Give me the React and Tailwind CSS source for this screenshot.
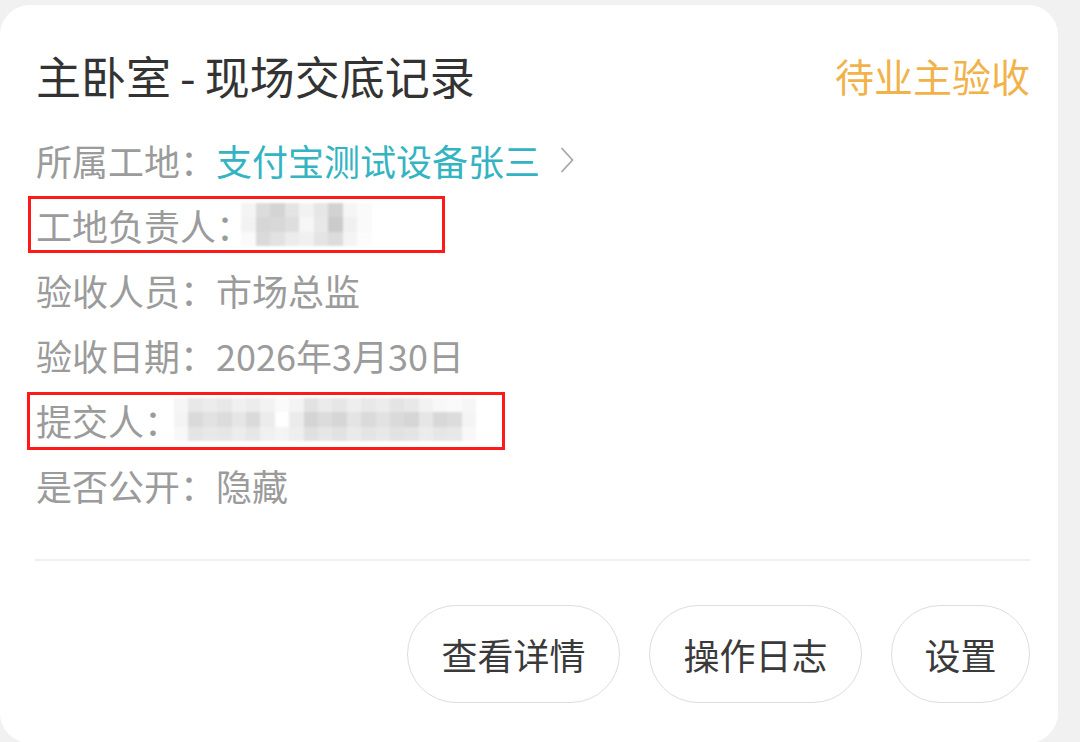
import React from 'react';

const font = { fontFamily: '"Noto Sans CJK SC", "Noto Sans", sans-serif' };

// mosaic cells for the masked values (gray tones, row by row)
const mask1 = [
  ['#f4f4f4', '#dcdcdc', '#d4d4d4', '#e4e4e4', '#f2f2f2', '#e6e6e6', '#d2d2d2', '#f5f5f5', '#fafafa'],
  ['#f2f2f2', '#d6d6d6', '#d8d8d8', '#dedede', '#f6f6f6', '#e8e8e8', '#cbcbcb', '#f0f0f0', '#fafafa'],
  ['#fafafa', '#dadada', '#e2e2e2', '#ececec', '#f0f0f0', '#e4e4e4', '#dcdcdc', '#f4f4f4', '#fcfcfc'],
];
const mask2 = [
  ['#f6f6f6', '#e8e8e8', '#ececec', '#e8e8e8', '#f0f0f0', '#ececec', '#f2f2f2', '#fafafa', '#f4f4f4', '#e2e2e2', '#ebebeb', '#e6e6e6', '#eeeeee', '#e8e8e8', '#ececec', '#e4e4e4', '#e8e8e8', '#f2f2f2', '#f8f8f8', '#fafafa', '#f6f6f6'],
  ['#f4f4f4', '#dadada', '#e2e2e2', '#dcdcdc', '#e6e6e6', '#dadada', '#ececec', '#ffffff', '#ebebeb', '#d4d4d4', '#dcdcdc', '#d6d6d6', '#e4e4e4', '#dadada', '#e2e2e2', '#dadada', '#d6d6d6', '#e6e6e6', '#d8d8d8', '#dcdcdc', '#f4f4f4'],
  ['#f8f8f8', '#e4e4e4', '#e8e8e8', '#e6e6e6', '#ececec', '#e6e6e6', '#f0f0f0', '#f4f4f4', '#eeeeee', '#e0e0e0', '#e6e6e6', '#e2e2e2', '#eaeaea', '#e4e4e4', '#e8e8e8', '#e2e2e2', '#e4e4e4', '#ececec', '#e6e6e6', '#e8e8e8', '#f8f8f8'],
];

const Mosaic = ({ cells, cell }) => (
  <div className="flex flex-col blur-[1px]">
    {cells.map((row, i) => (
      <div key={i} className="flex">
        {row.map((c, j) => (
          <div key={j} style={{ backgroundColor: c, width: cell, height: cell }} />
        ))}
      </div>
    ))}
  </div>
);

const Row = ({ label, children }) => (
  <div className="h-[65px] flex items-center text-[36px] text-[#9b9b9b] leading-none relative">
    <span>{label}：</span>
    {children}
  </div>
);

const Pill = ({ children, className = '' }) => (
  <button
    className={`h-[98px] rounded-full border-[1.5px] border-[#dddddd] bg-white text-[36px] text-[#3a3a3a] flex items-center justify-center ${className}`}
  >
    {children}
  </button>
);

export default function App() {
  return (
    <div className="w-[1080px] h-[742px] bg-[#f1f1f1] pt-[5px] overflow-hidden" style={font}>
      <div className="w-[1058px] h-[738px] bg-white rounded-[30px] pl-[36px] pr-[28px] pt-[40px]">
        {/* header */}
        <div className="h-[60px] flex items-center justify-between">
          <h1 className="text-[45px] text-[#333333] leading-none">
            主卧室<span className="mx-[9px]">-</span>现场交底记录
          </h1>
          <span className="text-[39px] text-[#f2b24a] leading-none">待业主验收</span>
        </div>

        {/* details */}
        <div className="mt-[22px] flex flex-col">
          <Row label="所属工地">
            <span className="text-[#34b4c2]">支付宝测试设备张三</span>
            <svg className="ml-[20px]" width="14" height="30" viewBox="0 0 14 30" fill="none">
              <path d="M1.5 3 L12.5 15 L1.5 27" stroke="#a8a8a8" strokeWidth="1.8" />
            </svg>
          </Row>
          <Row label="工地负责人">
            <div className="ml-[-11px]">
              <Mosaic cells={mask1} cell={14.5} />
            </div>
            <div className="absolute left-[-8px] top-[4px] w-[417px] h-[57px] border-[3px] border-[#ff1a1a]" />
          </Row>
          <Row label="验收人员">
            <span>市场总监</span>
          </Row>
          <Row label="验收日期">
            <span>2026年3月30日</span>
          </Row>
          <Row label="提交人">
            <div className="ml-[-6px]">
              <Mosaic cells={mask2} cell={14.4} />
            </div>
            <div className="absolute left-[-9px] top-[5px] w-[478px] h-[58px] border-[3px] border-[#ff1a1a]" />
          </Row>
          <Row label="是否公开">
            <span>隐藏</span>
          </Row>
        </div>

        <div className="mt-[42px] h-[1.5px] bg-[#efefef] ml-[-1px]" />

        {/* actions */}
        <div className="mt-[44px] flex justify-end gap-[29px]">
          <Pill className="w-[213px]">查看详情</Pill>
          <Pill className="w-[213px]">操作日志</Pill>
          <Pill className="w-[139px]">设置</Pill>
        </div>
      </div>
    </div>
  );
}
